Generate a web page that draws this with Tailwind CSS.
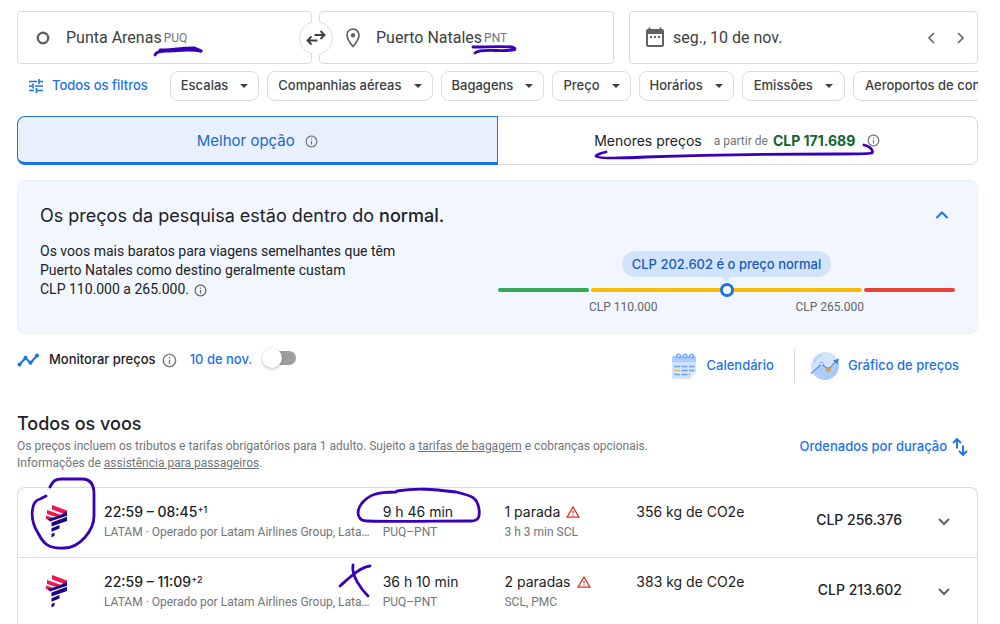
<!DOCTYPE html>
<html lang="pt-BR">
<head>
    <meta charset="UTF-8">
    <meta name="viewport" content="width=device-width, initial-scale=1.0">
    <title>Punta Arenas - Puerto Natales | Voos</title>
    <script src="https://cdn.jsdelivr.net/npm/@tailwindcss/browser@4"></script>
</head>
<body class="relative overflow-x-hidden bg-white font-['Roboto',sans-serif] text-[#202124]">

    <!-- Shared icons -->
    <svg class="hidden">
        <symbol id="info" viewBox="1 1 22 22"><path fill="currentColor" d="M11 7h2v2h-2zm0 4h2v6h-2zm1-9C6.480 2 2 6.480 2 12s4.480 10 10 10 10-4.480 10-10S17.520 2 12 2zm0 18c-4.410 0-8-3.590-8-8s3.590-8 8-8 8 3.590 8 8-3.590 8-8 8z"/></symbol>
        <symbol id="caret" viewBox="0 0 8 4"><path fill="currentColor" d="M0 0h8L4 4z"/></symbol>
        <symbol id="warning" viewBox="1 1 22 22"><path fill="currentColor" d="M12 5.990 19.530 19H4.470L12 5.990M12 2 1 21h22L12 2zm1 14h-2v2h2v-2zm0-6h-2v4h2v-4z"/></symbol>
        <symbol id="latam" viewBox="0 0 22 33">
            <path fill="#ed1650" d="M6 0 21 5.500V10L6 4.500zM1 5l16 5.500-5 2L1 9zM0 10.500l9 3-5 1.800-4-1.600z"/>
            <path fill="#1b0088" d="M21 6.500v4.300L4 16.500l-2.500-2.200L13 10.800zM21 11.800v4.300L5.500 21.500v-4zM13.500 20v3.600l-8 3.200v-3.600zM8.500 27.500v3.200l-3 1.800v-3.600z"/>
        </symbol>
    </svg>

    <main class="pt-[11px] pr-[22px] pl-[17px]">

        <!-- Search fields -->
        <form class="grid grid-cols-[597fr_349fr] gap-[15px] text-[#3c4043]">
            <div class="relative grid grid-cols-2 gap-[7px]">
                <label class="flex h-[53px] items-center rounded border border-[#dadce0] pl-[17px]">
                    <svg class="size-4 shrink-0" viewBox="0 0 16 16"><circle cx="8" cy="8" r="5.200" fill="none" stroke="#5f6368" stroke-width="2.400"/></svg>
                    <input type="text" aria-label="De onde?" value="Punta Arenas" class="ml-[15px] field-sizing-content text-base outline-none">
                    <span class="ml-[2px] text-xs text-[#70757a]">PUQ</span>
                </label>
                <label class="flex h-[53px] items-center rounded border border-[#dadce0] pl-[23px]">
                    <svg class="size-5 shrink-0" viewBox="0 0 20 20"><path d="M10 1.200c-3.500 0-6 2.600-6 6 0 4.200 6 11.300 6 11.300s6-7.100 6-11.300c0-3.400-2.500-6-6-6z" fill="none" stroke="#5f6368" stroke-width="1.700"/><circle cx="10" cy="7.300" r="2.200" fill="#5f6368"/></svg>
                    <input type="text" aria-label="Para onde?" value="Puerto Natales" class="ml-[13px] field-sizing-content text-base outline-none">
                    <span class="ml-[2px] text-xs text-[#70757a]">PNT</span>
                </label>
                <button type="button" aria-label="Trocar origem e destino" class="absolute inset-0 m-auto size-[34px]">
                    <svg class="size-[34px]" viewBox="0 0 34 34" fill="none">
                        <circle cx="17" cy="17" r="16.500" fill="#fff"/>
                        <path d="M13.500.9a16.500 16.500 0 0 0 0 32.200M20.500.9a16.500 16.500 0 0 1 0 32.200" stroke="#dadce0"/>
                        <path d="M15.500 14H25M21.500 10l4 4-4 4M18.500 19.500H9M12.500 15.500l-4 4 4 4" stroke="#3c4043" stroke-width="1.900"/>
                    </svg>
                </button>
            </div>
            <div class="flex h-[53px] items-center rounded border border-[#dadce0] pr-px pl-[13px]">
                <svg class="size-6 shrink-0" viewBox="0 0 24 24"><path fill="#5f6368" fill-rule="evenodd" d="M5.500 1.500h2V3h9V1.500h2V3H19c1.100 0 2 .9 2 2v14c0 1.100-.9 2-2 2H5c-1.100 0-2-.9-2-2V5c0-1.100.9-2 2-2h.5zM5 8v11h14V8zM7 10h2v2H7zm4 0h2v2h-2zm4 0h2v2h-2z"/></svg>
                <input type="text" aria-label="Partida" value="seg., 10 de nov." class="ml-[6px] w-0 min-w-0 flex-1 text-base outline-none">
                <button type="button" aria-label="Dia anterior" class="grid size-[30px] place-items-center"><svg class="h-3 w-2" viewBox="0 0 8 12"><path d="M7 1 2 6l5 5" fill="none" stroke="#5f6368" stroke-width="1.600"/></svg></button>
                <button type="button" aria-label="Próximo dia" class="grid size-[30px] place-items-center"><svg class="h-3 w-2" viewBox="0 0 8 12"><path d="m1 1 5 5-5 5" fill="none" stroke="#5f6368" stroke-width="1.600"/></svg></button>
            </div>
        </form>

        <!-- Filters -->
        <div class="mt-[7px] flex gap-2 overflow-hidden font-['Inter',sans-serif] text-[13px] font-medium whitespace-nowrap text-[#3c4043]">
            <button class="mr-[14px] flex h-[30px] shrink-0 items-center gap-2 pl-[11px] text-[#1a73e8]">
                <svg class="size-4" viewBox="0 0 16 16" fill="none" stroke="currentColor" stroke-width="1.600"><path d="M1 3.500h8M11.500 3.500H15M1 8h3M7 8h8M1 12.500h5M8.500 12.500H15M11 1v5M5 5.500v5M8.500 10v5"/></svg>
                Todos os filtros
            </button>
            <button class="flex h-[30px] shrink-0 items-center gap-3 rounded-lg border border-[#dadce0] px-[10px]">Escalas <svg class="h-1 w-2"><use href="#caret"/></svg></button>
            <button class="flex h-[30px] shrink-0 items-center gap-3 rounded-lg border border-[#dadce0] px-[10px]">Companhias aéreas <svg class="h-1 w-2"><use href="#caret"/></svg></button>
            <button class="flex h-[30px] shrink-0 items-center gap-3 rounded-lg border border-[#dadce0] px-[10px]">Bagagens <svg class="h-1 w-2"><use href="#caret"/></svg></button>
            <button class="flex h-[30px] shrink-0 items-center gap-3 rounded-lg border border-[#dadce0] px-[10px]">Preço <svg class="h-1 w-2"><use href="#caret"/></svg></button>
            <button class="flex h-[30px] shrink-0 items-center gap-3 rounded-lg border border-[#dadce0] px-[10px]">Horários <svg class="h-1 w-2"><use href="#caret"/></svg></button>
            <button class="flex h-[30px] shrink-0 items-center gap-3 rounded-lg border border-[#dadce0] px-[11px]">Emissões <svg class="h-1 w-2"><use href="#caret"/></svg></button>
            <button class="flex h-[30px] shrink-0 items-center gap-3 rounded-lg border border-[#dadce0] px-[11px]">Aeroportos de conexão <svg class="h-1 w-2"><use href="#caret"/></svg></button>
        </div>

        <!-- Sort tabs -->
        <div class="mt-[15px] grid h-[49px] grid-cols-2 font-['Inter',sans-serif] text-[15px]">
            <button class="flex items-center justify-center gap-[10px] rounded-l-lg border border-b-[3px] border-[#1a73e8] bg-[#e8f0fe] pt-[3px] text-[#1967d2]">
                Melhor opção <svg class="size-[13px] text-[#70757a]"><use href="#info"/></svg>
            </button>
            <button class="flex items-center justify-center rounded-r-lg border border-l-0 border-[#dadce0]">
                <span class="text-sm">Menores preços</span>
                <span class="ml-3 font-['Roboto',sans-serif] text-xs text-[#70757a]">a partir de</span>
                <span class="ml-[5px] text-sm font-bold text-[#0d652d]">CLP 171.689</span>
                <svg class="ml-3 size-[13px] text-[#70757a]"><use href="#info"/></svg>
            </button>
        </div>

        <!-- Price insights -->
        <section class="mt-[15px] flex h-[154px] justify-between rounded-lg border border-[#e8f0fe] bg-[#f2f7ff] pr-[22px] pl-[22px]">
            <div class="pt-[23px]">
                <h2 class="font-['Inter',sans-serif] text-lg leading-6 whitespace-nowrap">Os preços da pesquisa estão dentro do <b class="font-medium">normal.</b></h2>
                <p class="mt-[14px] w-[360px] text-sm leading-[19px]">Os voos mais baratos para viagens semelhantes que têm<br>Puerto Natales como destino geralmente custam<br>CLP 110.000 a 265.000. <svg class="ml-[2px] inline size-[13px] text-[#5f6368]"><use href="#info"/></svg></p>
            </div>
            <div class="flex w-[457px] flex-col">
                <button aria-label="Recolher" class="mt-[22px] mr-[1px] grid size-6 place-items-center self-end text-[#1a73e8]"><svg class="h-2 w-[14px]" viewBox="0 0 14 8"><path d="m1.500 7 5.500-5.500L12.500 7" fill="none" stroke="currentColor" stroke-width="2"/></svg></button>
                <div class="relative mt-6 self-center rounded-full bg-[#d2e3fc] px-[10px] font-['Inter',sans-serif] text-[13px] leading-[26px] font-medium text-[#185abc]">
                    CLP 202.602 é o preço normal
                    <svg class="absolute top-full left-1/2 h-[5px] w-2 -translate-x-1/2" viewBox="0 0 8 5"><path fill="#d2e3fc" d="M0 0h8L4 5z"/></svg>
                </div>
                <div class="relative mt-[11px] flex h-1 gap-[2px]">
                    <div class="flex-1 rounded-full bg-[#34a853]"></div>
                    <div class="flex-[3] rounded-full bg-[#fbbc04]"></div>
                    <div class="flex-1 rounded-full bg-[#ea4335]"></div>
                    <div class="absolute inset-x-0 -top-[5px] mx-auto size-[14px] rounded-full border-[3px] border-[#1a73e8] bg-white"></div>
                </div>
                <div class="mt-[7px] flex justify-between px-[91px] text-xs leading-4 text-[#5f6368]">
                    <span>CLP 110.000</span>
                    <span>CLP 265.000</span>
                </div>
            </div>
        </section>

        <!-- Price tracking -->
        <div class="mt-[14px] flex justify-between font-['Inter',sans-serif] text-[13px] font-medium">
            <div class="flex h-6 items-center">
                <svg class="h-[14px] w-[22px]" viewBox="0 0 22 14"><path d="m2.500 11.500 6-6.500 5 5L20 2.500" fill="none" stroke="#1a73e8" stroke-width="2"/><g fill="#1a73e8"><circle cx="2.500" cy="11.500" r="2"/><circle cx="8.500" cy="4.800" r="2"/><circle cx="13.500" cy="9.800" r="2"/><circle cx="20" cy="2.500" r="2"/></g></svg>
                <span class="ml-[10px]">Monitorar preços</span>
                <svg class="ml-[6px] size-[15px] text-[#70757a]"><use href="#info"/></svg>
                <label for="monitor" class="ml-[13px] text-[#1a73e8]">10 de nov.</label>
                <input id="monitor" type="checkbox" role="switch" class="relative mb-1 ml-[14px] h-[14px] w-[30px] appearance-none rounded-full bg-[#9e9e9e] before:absolute before:-top-[3px] before:-left-1 before:size-5 before:rounded-full before:bg-white before:shadow-[0_1px_3px_rgba(0,0,0,0.3)] checked:bg-[#8ab4f8] checked:before:left-3">
            </div>
            <div class="mr-[19px] flex h-[35px] items-center text-[#1a73e8]">
                <button class="flex items-center gap-[10px]">
                    <svg class="h-7 w-[26px]" viewBox="0 0 26 28">
                        <path fill="#d2e3fc" d="M1 9h24v12l-6 6H2.500C1.500 27 1 26.500 1 25.500z"/><path fill="#aecbfa" d="M2.500 4h21c1 0 1.500.5 1.500 1.500V10H1V5.500C1 4.500 1.500 4 2.500 4z"/><path fill="#e8f0fe" d="M19 27v-6h6z"/>
                        <g fill="none" stroke="#6f9ff0" stroke-width="1.300"><path d="M5.500 6c-1-4 4-5 4-2 0 1.500-1 2-2 2M12 6c-1-4 4-5 4-2 0 1.500-1 2-2 2M18.500 6c-1-4 4-5 4-2 0 1.500-1 2-2 2"/><path d="M3 14.500h6M10.500 14.500h6M18 14.500h5.500M10.500 18.500h6M18 18.500h5.500M3 22.500h6M10.500 22.500h6M18 22.500h1.500"/></g>
                        <path stroke="#e8bf50" stroke-width="1.500" d="M3 18.500h6"/>
                    </svg>
                    Calendário
                </button>
                <button class="ml-5 flex h-[34px] items-center gap-[9px] border-l border-[#dadce0] pl-[15px]">
                    <svg class="h-7 w-[29px]" viewBox="0 0 29 28">
                        <circle cx="15" cy="14" r="14" fill="#d2e3fc"/><path fill="#aecbfa" d="M3 21 11.500 13l7 5L28.500 10A14 14 0 0 1 3 21z"/>
                        <path d="M15 25.500A11.500 11.500 0 0 0 26.500 14M4 11A11.500 11.500 0 0 1 12 3" fill="none" stroke="#9dc0f9" stroke-width="1"/>
                        <path d="M1 21.500 11.500 12l7 5.500 7-7.500" fill="none" stroke="#5b87dd" stroke-width="1.200"/><path fill="#4a80dc" d="m23 8.500 6-2-1.500 6z"/>
                        <circle cx="11.500" cy="12" r="1.700" fill="#fff" stroke="#669df6"/><circle cx="18.500" cy="17.300" r="1.900" fill="#f9ab00" stroke="#b07a20" stroke-width=".6"/>
                    </svg>
                    Gráfico de preços
                </button>
            </div>
        </div>

        <!-- Results heading -->
        <div class="mt-[29px] flex items-start justify-between">
            <div>
                <h2 class="font-['Inter',sans-serif] text-lg leading-6 font-medium">Todos os voos</h2>
                <p class="mt-[2px] text-xs leading-[17px] text-[#70757a]">Os preços incluem os tributos e tarifas obrigatórios para 1 adulto. Sujeito a <a href="#" class="underline">tarifas de bagagem</a> e cobranças opcionais.<br>Informações de <a href="#" class="underline">assistência para passageiros</a>.</p>
            </div>
            <button class="mt-[25px] mr-[10px] flex items-center gap-[5px] font-['Inter',sans-serif] text-[13px] font-medium text-[#1a73e8]">
                Ordenados por duração
                <svg class="h-5 w-4" viewBox="0 0 16 20" fill="none" stroke="currentColor" stroke-width="1.900"><path d="M5 11.500V2.500M1 6l4-4 4 4M11 8.500v9M7 14l4 4 4-4"/></svg>
            </button>
        </div>

        <!-- Flights -->
        <ul class="mt-[15px] rounded-t-lg border border-b-0 border-[#dadce0] font-['Inter',sans-serif] text-sm">
            <li class="grid h-[70px] grid-cols-[86px_279fr_122fr_132fr_157fr_109fr_75px] border-b border-[#dadce0] pt-[14px] leading-5">
                <svg class="mt-[3px] ml-7 h-[33px] w-[22px]"><use href="#latam"/></svg>
                <div class="whitespace-nowrap">
                    <div class="font-medium">22:59 – 08:45<sup class="text-[9px]">+1</sup></div>
                    <div class="font-['Roboto',sans-serif] text-xs leading-5 text-[#70757a]">LATAM · Operado por Latam Airlines Group, Lata…</div>
                </div>
                <div>
                    <div>9 h 46 min</div>
                    <div class="font-['Roboto',sans-serif] text-xs leading-5 text-[#70757a]">PUQ–PNT</div>
                </div>
                <div>
                    <div class="flex items-center gap-[6px]">1 parada <svg class="size-[14px] text-[#d93025]"><use href="#warning"/></svg></div>
                    <div class="font-['Roboto',sans-serif] text-xs leading-5 text-[#70757a]">3 h 3 min SCL</div>
                </div>
                <div>356 kg de CO2e</div>
                <div class="mt-2 text-right font-medium whitespace-nowrap">CLP 256.376</div>
                <button aria-label="Detalhes do voo" class="mt-2 ml-[30px] grid size-6 place-items-center"><svg class="h-2 w-3" viewBox="0 0 12 8"><path d="m1 1 5 5 5-5" fill="none" stroke="#5f6368" stroke-width="2"/></svg></button>
            </li>
            <li class="grid h-[70px] grid-cols-[86px_279fr_122fr_132fr_157fr_109fr_75px] border-b border-[#dadce0] pt-[14px] leading-5">
                <svg class="mt-[3px] ml-7 h-[33px] w-[22px]"><use href="#latam"/></svg>
                <div class="whitespace-nowrap">
                    <div class="font-medium">22:59 – 11:09<sup class="text-[9px]">+2</sup></div>
                    <div class="font-['Roboto',sans-serif] text-xs leading-5 text-[#70757a]">LATAM · Operado por Latam Airlines Group, Lata…</div>
                </div>
                <div>
                    <div>36 h 10 min</div>
                    <div class="font-['Roboto',sans-serif] text-xs leading-5 text-[#70757a]">PUQ–PNT</div>
                </div>
                <div>
                    <div class="flex items-center gap-[6px]">2 paradas <svg class="size-[14px] text-[#d93025]"><use href="#warning"/></svg></div>
                    <div class="font-['Roboto',sans-serif] text-xs leading-5 text-[#70757a]">SCL, PMC</div>
                </div>
                <div>383 kg de CO2e</div>
                <div class="mt-2 text-right font-medium whitespace-nowrap">CLP 213.602</div>
                <button aria-label="Detalhes do voo" class="mt-2 ml-[30px] grid size-6 place-items-center"><svg class="h-2 w-3" viewBox="0 0 12 8"><path d="m1 1 5 5 5-5" fill="none" stroke="#5f6368" stroke-width="2"/></svg></button>
            </li>
        </ul>
    </main>

    <!-- Pen marks -->
    <svg class="pointer-events-none absolute top-0 left-0 h-[624px] w-[1000px]" viewBox="0 0 1000 624" fill="none" stroke="#3a00b8" stroke-width="2.800" stroke-linecap="round" stroke-linejoin="round">
        <path d="M155 55c1-3 5-4 11-4 12 0 22-2 35 0"/>
        <path d="M160 50c10 0 20-2 34-2l7 3" stroke-width="3"/>
        <path d="M473 47c13 0 29-1 39 0 4 1 4 3 0 3-11 2-32-2-37 3"/>
        <path d="M606 152c-5 1-10 3-10 4 2 3 31 2 50 1 60-2 130-3 190-3 16 0 32 0 36-1 2-3-3-7-8-8"/>
        <path d="M50 487c3-6 5-8 12-8h20c9 0 12 6 12 15v22c0 14-14 32-30 32-16 1-21-5-26-15-9-14-7-32 2-34 2-1 4-2 6-3"/>
        <path d="M396 492c-20 0-27 3-34 11-7 9-4 18 5 18 30 1 70 0 104 0 8 0 9-5 8-12-2-12-7-13-23-17-25-3-39-4-59-1"/>
        <path d="M340 586c9-8 20-19 30-20M353 565c-2 11 9 25 15 31"/>
    </svg>
</body>
</html>
